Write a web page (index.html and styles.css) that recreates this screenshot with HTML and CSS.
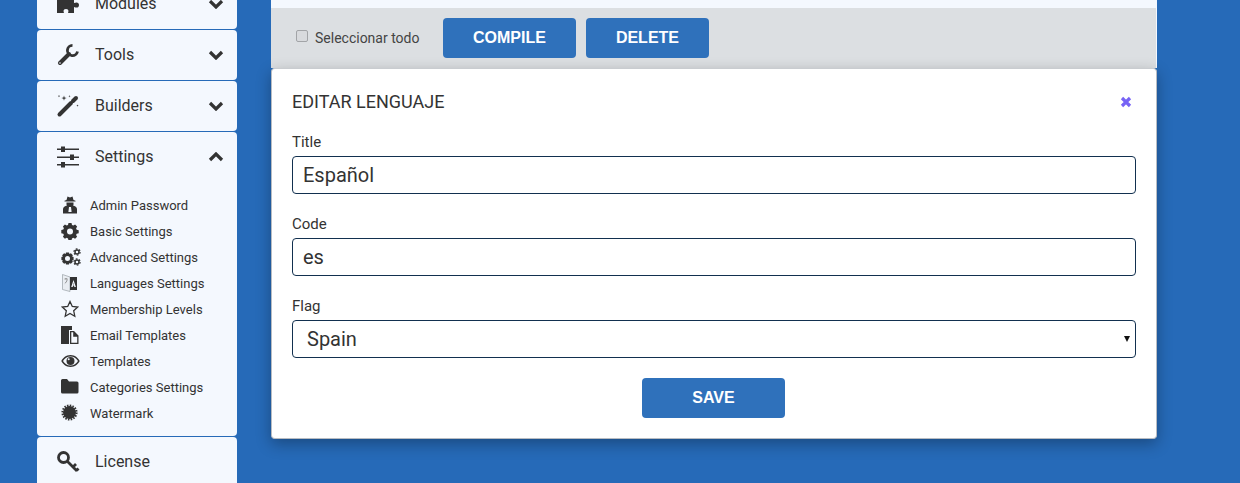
FILE: index.html
```html
<!DOCTYPE html>
<html lang="es">
<head>
<meta charset="utf-8">
<title>Editar lenguaje</title>
<link rel="stylesheet" href="styles.css">
</head>
<body>
<div class="shell">
  <nav class="sidebar">
    <div class="nav-item">
      <div class="nav-head">
        <svg class="nav-icon" viewBox="0 0 24 24"><path d="M1 5h6.500C6.500 2 7.500 1 9.500 1s3 1 2 4H18v6c3-1.200 5-.5 5 2s-2 3.200-5 2v6h-6c1-2.500.3-4-2-4s-3 1.500-2 4H1z"/></svg>
        <span class="nav-label">Modules</span>
        <svg class="chev" viewBox="0 0 16 10"><path d="M2 2l6 6 6-6"/></svg>
      </div>
    </div>
    <div class="nav-item">
      <div class="nav-head">
        <svg class="nav-icon stroked" viewBox="0 0 24 24"><path class="w4" d="M4 20l9-9"/><path class="w3" d="M21.500 8.500A5.100 5.100 0 1 1 16.500 2.400"/><circle class="hole" cx="4" cy="20" r=".8"/></svg>
        <span class="nav-label">Tools</span>
        <svg class="chev" viewBox="0 0 16 10"><path d="M2 2l6 6 6-6"/></svg>
      </div>
    </div>
    <div class="nav-item">
      <div class="nav-head">
        <svg class="nav-icon stroked" viewBox="0 0 24 24"><path class="w4" d="M3.500 20.500l11.500-11.500"/><path class="w4" d="M17 7l3-3"/><path class="spark" d="M8 1.500l.6 2 2 .6-2 .6-.6 2-.6-2-2-.6 2-.6zM13.500 1l.3.900.9.300-.9.300-.3.900-.3-.9-.9-.3.9-.3zM3 1l.3.800.8.300-.8.300-.3.800-.3-.8-.8-.3.8-.3zM21.500 10.500l.3.800.8.300-.8.300-.3.800-.3-.8-.8-.3.8-.3z"/></svg>
        <span class="nav-label">Builders</span>
        <svg class="chev" viewBox="0 0 16 10"><path d="M2 2l6 6 6-6"/></svg>
      </div>
    </div>
    <div class="nav-item">
      <div class="nav-head">
        <svg class="nav-icon" viewBox="0 0 24 24"><path d="M1 3.500h4v-2h4v2h14V5H9v2H5V5H1zM1 11.500h13v-2h4v2h5V13h-5v2h-4v-2H1zM1 19h4v-2h4v2h14v1.500H9v2H5v-2H1z"/></svg>
        <span class="nav-label">Settings</span>
        <svg class="chev" viewBox="0 0 16 10"><path d="M2 8l6-6 6 6"/></svg>
      </div>
      <ul class="sub-list">
        <li class="sub-item"><svg class="sub-icon" viewBox="0 0 18 18"><path d="M5.500 4l1-3.500L9 1.500l2.500-1 1 3.500 2 .8v.7h-11v-.7zM5.500 6.500h7v2c0 1.500-1.500 2.500-3.500 2.500s-3.500-1-3.500-2.500zM2 17.500v-4.500c0-2 2-3 4-3.500l1 1h4l1-1c2 .5 4 1.500 4 3.500v4.500z"/><path class="tie" d="M8 11h2l.6 5h-3.200z"/></svg>Admin Password</li>
        <li class="sub-item"><svg class="sub-icon" viewBox="0 0 18 18"><path fill-rule="evenodd" d="M7.500 1h3l.5 2 1.300.6 1.800-1 2 2-1 1.800.6 1.300 2 .5v3l-2 .5-.6 1.300 1 1.800-2 2-1.800-1-1.300.6-.5 2h-3l-.5-2-1.300-.6-1.800 1-2-2 1-1.800-.6-1.300-2-.5V8l2-.5.6-1.300-1-1.800 2-2 1.800 1L7 3zM9 6.500a3 3 0 1 0 0 6 3 3 0 0 0 0-6z"/></svg>Basic Settings</li>
        <li class="sub-item"><svg class="sub-icon wide" viewBox="0 0 20 18"><path fill-rule="evenodd" d="M5 4.500h3l.4 1.500 1.500-.8 2 2-.8 1.400 1.500.4v3l-1.500.4.800 1.400-2 2-1.500-.8L8 16.500H5l-.4-1.500-1.500.8-2-2 .8-1.400L.4 12v-3l1.500-.4-.8-1.400 2-2 1.500.8zM6.500 8a2.500 2.500 0 1 0 0 5 2.500 2.500 0 0 0 0-5z"/><circle class="small-cog" cx="16" cy="4" r="2"/><circle class="small-teeth" cx="16" cy="4" r="3.100"/><circle class="small-cog" cx="16" cy="14" r="2"/><circle class="small-teeth" cx="16" cy="14" r="3.100"/></svg>Advanced Settings</li>
        <li class="sub-item"><svg class="sub-icon" viewBox="0 0 18 18"><path class="lang-back" d="M1.500 .5L9 3v14.500l-7.500-2z"/><path class="lang-glyph" d="M3.500 5h3M5 4v1M3.800 9.500c1-.8 2-2 2.400-4"/><path fill-rule="evenodd" d="M9 3h7v13H9zM12.500 6l-2.300 7h1.500l.4-1.400h.9l.4 1.400h1.500zM12.100 10.400l.4-1.700.4 1.700z"/></svg>Languages Settings</li>
        <li class="sub-item"><svg class="sub-icon" viewBox="0 0 18 18"><path class="outline" d="M9 1.500l2.300 5 5.400.6-4 3.700 1.100 5.400L9 13.500l-4.800 2.700 1.100-5.400-4-3.700 5.400-.6z"/></svg>Membership Levels</li>
        <li class="sub-item"><svg class="sub-icon" viewBox="0 0 18 18"><path fill-rule="evenodd" d="M0 0h11v4H8v14H0zM9 5h4l4.500 4.500V18H9zM10.300 6.300v10.400h5.900v-6h-4V6.300z"/></svg>Email Templates</li>
        <li class="sub-item"><svg class="sub-icon wide" viewBox="0 0 20 18"><path fill-rule="evenodd" d="M9.500 3c4.500 0 7.500 2.800 9.200 6-1.700 3.200-4.700 6-9.200 6S2 12.200.3 9C2 5.800 5 3 9.500 3zM9.500 4.400C6.200 4.400 3.600 6.300 2 9c1.600 2.700 4.200 4.600 7.500 4.600S15.400 11.700 17 9c-1.600-2.700-4.200-4.600-7.500-4.600zM9.500 5a4 4 0 1 1 0 8 4 4 0 0 1 0-8zM7.700 6.300a1 1 0 1 0 0 2 1 1 0 0 0 0-2z"/></svg>Templates</li>
        <li class="sub-item"><svg class="sub-icon wide" viewBox="0 0 20 18"><path d="M1.500 1h4.500l2 2.500h8a1.500 1.500 0 0 1 1.500 1.500v9a1.500 1.500 0 0 1-1.500 1.500H1.500A1.500 1.500 0 0 1 0 14V2.500A1.500 1.500 0 0 1 1.500 1z"/></svg>Categories Settings</li>
        <li class="sub-item"><svg class="sub-icon" viewBox="0 0 18 18"><circle cx="8.500" cy="8.500" r="6.500"/><circle class="spikes" cx="8.500" cy="8.500" r="7"/></svg>Watermark</li>
      </ul>
    </div>
    <div class="nav-item">
      <div class="nav-head">
        <svg class="nav-icon stroked" viewBox="0 0 24 24"><circle class="w3" cx="7.500" cy="7.500" r="5"/><path class="w3" d="M11.500 11.500l9.500 9.500M17 17l3-3M20.500 20.500l2-2"/></svg>
        <span class="nav-label">License</span>
      </div>
    </div>
  </nav>

  <main class="content">
    <div class="top-strip"></div>
    <div class="toolbar">
      <label class="select-all"><input class="check" type="checkbox">Seleccionar todo</label>
      <button class="btn btn-compile" type="button">COMPILE</button>
      <button class="btn btn-delete" type="button">DELETE</button>
    </div>
    <section class="modal">
      <header class="modal-head">
        <h2 class="modal-title">EDITAR LENGUAJE</h2>
        <svg class="close" viewBox="0 0 12 12"><path d="M2 2l8 8M10 2l-8 8"/></svg>
      </header>
      <div class="field">
        <label class="field-label" for="t">Title</label>
        <input class="control" id="t" type="text" value="Español">
      </div>
      <div class="field">
        <label class="field-label" for="c">Code</label>
        <input class="control" id="c" type="text" value="es">
      </div>
      <div class="field">
        <label class="field-label" for="f">Flag</label>
        <div class="select-wrap">
          <select class="control control-select" id="f"><option>Spain</option></select>
        </div>
      </div>
      <div class="modal-actions">
        <button class="btn btn-save" type="button">SAVE</button>
      </div>
    </section>
  </main>
</div>
</body>
</html>
```
FILE: styles.css
```css
* { box-sizing: border-box; }
html, body { height: 100%; }
body {
  margin: 0;
  background: #266ab8;
  overflow: hidden;
  font-family: Roboto, "Liberation Sans", sans-serif;
  color: #333;
}
.shell {
  display: flex;
  align-items: flex-start;
  height: 483px;
  padding-left: 37px;
  overflow: hidden;
}
.sidebar {
  width: 200px;
  flex: none;
  margin-top: -21px;
  display: flex;
  flex-direction: column;
  gap: 1px;
}
.nav-item {
  background: #f4f8fe;
  border-radius: 4px;
}
.nav-head {
  height: 50px;
  display: flex;
  align-items: center;
  padding: 0 13px 0 19px;
}
.nav-icon {
  width: 24px;
  height: 24px;
  fill: #333;
  flex: none;
}
.nav-icon.stroked {
  fill: none;
  stroke: #333;
}
.nav-icon .w4 {
  stroke-width: 4;
  stroke-linecap: round;
}
.nav-icon .w3 {
  stroke-width: 2.800;
}
.nav-icon .hole {
  fill: #f4f8fe;
  stroke: none;
}
.nav-icon .spark {
  fill: #333;
  stroke: none;
}
.nav-label {
  margin-left: 15px;
  padding-bottom: 2px;
  font-size: 16px;
  flex: 1;
}
.chev {
  width: 16px;
  height: 10px;
  fill: none;
  stroke: #333;
  stroke-width: 3.200;
  flex: none;
}
.sub-list {
  list-style: none;
  margin: 0;
  padding: 10px 0 10px 24px;
}
.sub-item {
  height: 26px;
  display: flex;
  align-items: center;
  font-size: 13px;
}
.sub-icon {
  width: 18px;
  height: 18px;
  fill: #333;
  flex: none;
  margin-right: 11px;
}
.sub-icon.wide {
  width: 20px;
  margin-right: 9px;
}
.sub-icon .outline {
  fill: none;
  stroke: #333;
  stroke-width: 1.300;
}
.sub-icon .tie {
  fill: #f4f8fe;
}
.sub-icon .small-cog {
  fill: none;
  stroke: #333;
  stroke-width: 1.500;
}
.sub-icon .small-teeth {
  fill: none;
  stroke: #333;
  stroke-width: 1.200;
  stroke-dasharray: 1.700 1.550;
}
.sub-icon .lang-back {
  fill: #e9edf2;
  stroke: #9aa0a6;
  stroke-width: .7;
}
.sub-icon .lang-glyph {
  fill: none;
  stroke: #777;
  stroke-width: .8;
}
.sub-icon .spikes {
  fill: none;
  stroke: #333;
  stroke-width: 2.200;
  stroke-dasharray: 1.500 1.250;
}
.content {
  width: 886px;
  margin-left: 34px;
  flex: none;
}
.top-strip {
  height: 8px;
  background: #f4f8fe;
}
.toolbar {
  height: 60px;
  background: #dcdfe2;
  display: flex;
  align-items: center;
  gap: 10px;
  border-right: 1px solid #f4f8fe;
  padding-left: 25px;
}
.select-all {
  width: 147px;
  margin-right: -10px;
  display: flex;
  align-items: center;
  font-size: 14px;
  color: #444;
}
.check {
  appearance: none;
  margin: 0 7px 0 0;
  width: 12px;
  height: 12px;
  position: relative;
  top: -2px;
  background: #d8dadd;
  border: 1px solid #a2a4a7;
  border-radius: 2px;
}
.btn {
  height: 40px;
  border: 0;
  border-radius: 4px;
  background: #2f71bb;
  color: #fff;
  font-family: "Liberation Sans", Arial, sans-serif;
  font-weight: 700;
  font-size: 16px;
  padding: 0 30px;
}
.btn-save {
  width: 143px;
  padding: 0;
}
.modal {
  height: 371px;
  background: #fff;
  border: 1px solid #b8bcc2;
  border-top-color: #c9ccd0;
  border-radius: 4px;
  padding: 21px 20px 0;
  box-shadow: 0 5px 15px rgba(0, 0, 0, .3);
}
.modal-head {
  height: 22px;
  display: flex;
  align-items: center;
  justify-content: space-between;
  margin-bottom: 18px;
}
.modal-title {
  margin: 0;
  font-size: 18px;
  font-weight: 400;
  color: #333;
}
.close {
  width: 12px;
  height: 12px;
  margin: 2px 4px 0 0;
  fill: none;
  stroke: #7763f5;
  stroke-width: 3.200;
  flex: none;
}
.field {
  margin-bottom: 18px;
}
.field-label {
  display: block;
  height: 24px;
  line-height: 24px;
  font-size: 15px;
  margin-bottom: 2px;
}
.control {
  display: block;
  width: 100%;
  height: 38px;
  border: 1px solid #12304f;
  border-radius: 4px;
  background: #fff;
  padding: 0 10px;
  font-family: Roboto, "Liberation Sans", sans-serif;
  font-size: 20px;
  color: #333;
}
.control-select {
  appearance: none;
  padding-left: 14px;
}
.select-wrap {
  position: relative;
}
.select-wrap::after {
  content: "";
  position: absolute;
  right: 6px;
  top: 16px;
  border-style: solid;
  border-width: 6px 3px 0;
  border-color: #111 transparent transparent;
}
.modal-actions {
  display: flex;
  justify-content: center;
  padding: 2px 1px 0 0;
}
```
